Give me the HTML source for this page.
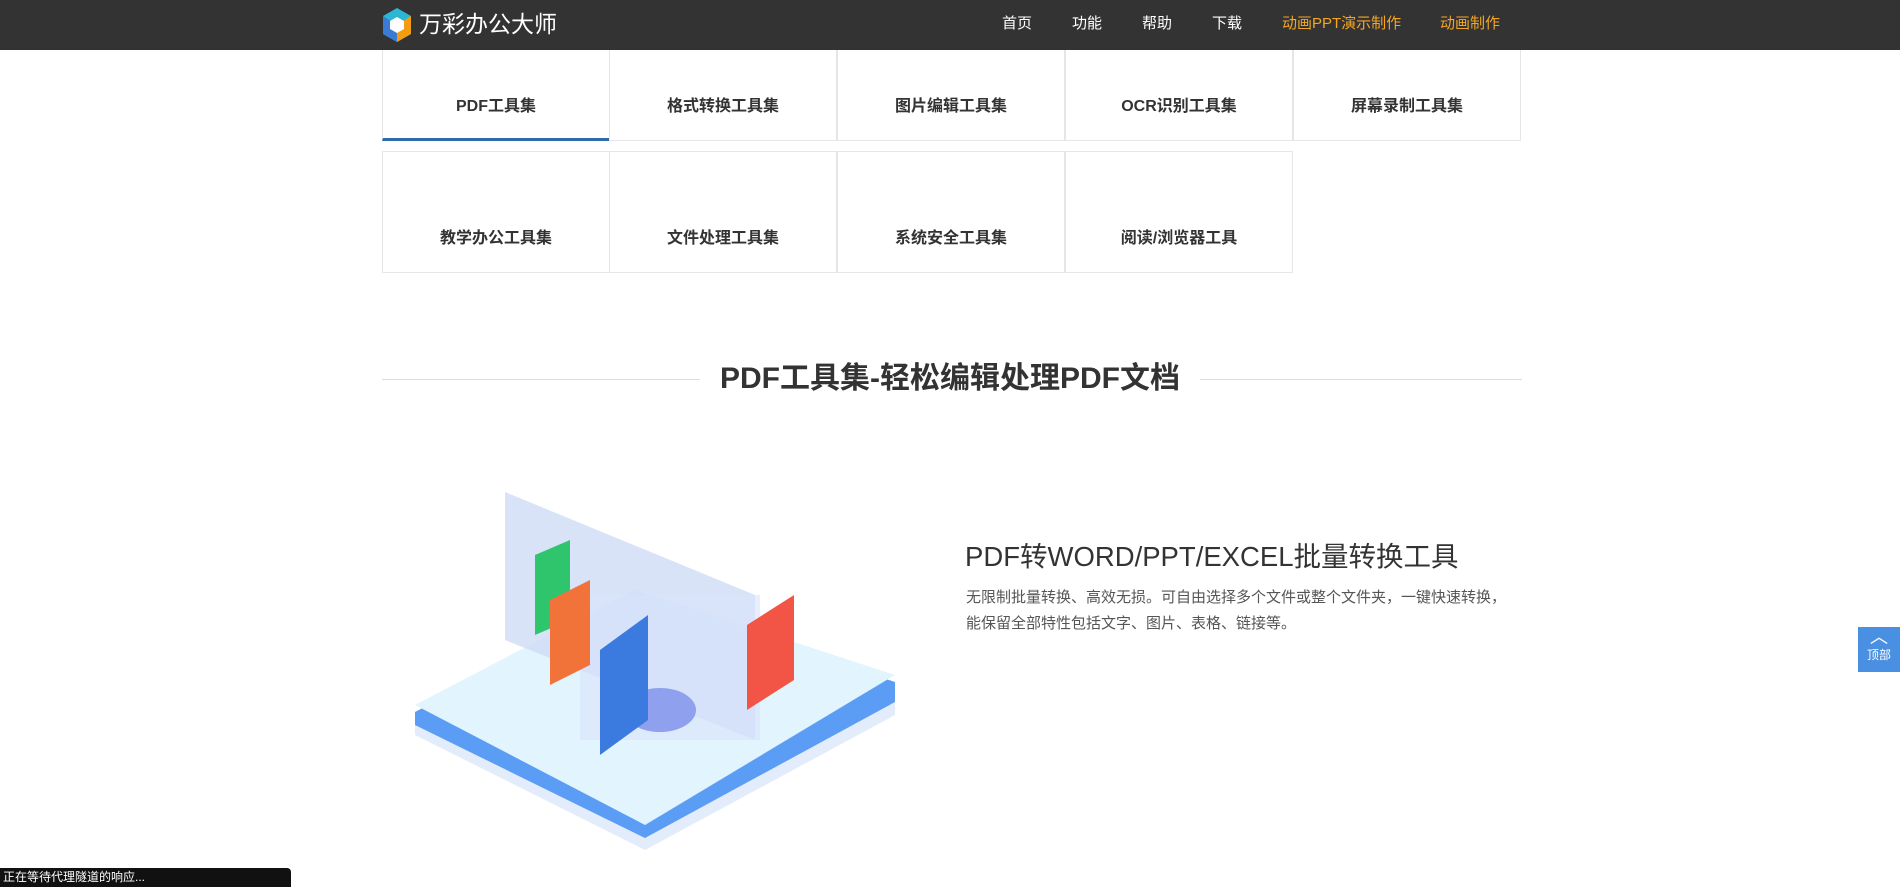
<!DOCTYPE html>
<html><head><meta charset="utf-8"><style>
*{margin:0;padding:0;box-sizing:border-box}
body{width:1900px;height:887px;overflow:hidden;background:#fff;font-family:"Liberation Sans","Noto Sans CJK SC",sans-serif;color:#333;position:relative}
.nav{position:absolute;left:0;top:0;width:1900px;height:50px;background:#333}
.logo{position:absolute;left:381px;top:7px}
.logotxt{position:absolute;left:419px;top:9px;color:#fff;font-size:23px;line-height:30px}
.ni{position:absolute;top:14px;font-size:15px;color:#fff;line-height:20px}
.ni.o{color:#f5a623}
.tab{position:absolute;width:228px;border:1px solid #e6e6e6;font-size:16px;font-weight:bold;text-align:center;color:#333}
.r1{top:50px;height:91px;line-height:20px;padding-top:47px;border-top:none}
.r2{top:151px;height:122px;padding-top:77px;line-height:20px}
.h2{position:absolute;left:382px;top:379px;width:1140px;height:1px;background:#ddd}
.h2t{position:absolute;left:700px;top:358px;width:500px;text-align:center;background:#fff;font-size:30px;font-weight:bold;line-height:42px;color:#333}
.pt{position:absolute;left:965px;top:538px;font-size:27.5px;line-height:38px;color:#333}
.pd{position:absolute;left:966px;top:585px;font-size:15px;line-height:26px;color:#555;width:546px}
.top{position:absolute;left:1858px;top:627px;width:42px;height:45px;background:#4a90e2;color:#fff;font-size:12px;text-align:center}
.status{position:absolute;left:0;top:868px;width:291px;height:19px;background:#111;color:#fff;font-size:12px;line-height:19px;padding-left:3px;border-radius:0 4px 0 0}
</style></head><body>
<div class="nav">
<svg class="logo" width="32" height="36" viewBox="0 0 32 36"><polygon points="16,1 30,9 30,27 16,35 2,27 2,9" fill="#2bb6d6"/><polygon points="16,18 30,9 30,27 16,35" fill="#f39c12"/><polygon points="2,27 16,35 16,18 2,9" fill="#3a7bd5"/><polygon points="16,10 23,14 23,22 16,26 9,22 9,14" fill="#fff"/></svg>
<div class="logotxt">万彩办公大师</div>
<div class="ni" style="left:1002px">首页</div>
<div class="ni" style="left:1072px">功能</div>
<div class="ni" style="left:1142px">帮助</div>
<div class="ni" style="left:1212px">下载</div>
<div class="ni o" style="left:1282px">动画PPT演示制作</div>
<div class="ni o" style="left:1440px">动画制作</div>
</div>
<div class="tab r1" style="left:382px;border-bottom:3px solid #2f6aad">PDF工具集</div>
<div class="tab r1" style="left:609px">格式转换工具集</div>
<div class="tab r1" style="left:837px">图片编辑工具集</div>
<div class="tab r1" style="left:1065px">OCR识别工具集</div>
<div class="tab r1" style="left:1293px">屏幕录制工具集</div>
<div class="tab r2" style="left:382px">教学办公工具集</div>
<div class="tab r2" style="left:609px">文件处理工具集</div>
<div class="tab r2" style="left:837px">系统安全工具集</div>
<div class="tab r2" style="left:1065px">阅读/浏览器工具</div>
<div class="h2"></div>
<div class="h2t">PDF工具集-轻松编辑处理PDF文档</div>
<svg style="position:absolute;left:400px;top:480px" width="510" height="380" viewBox="0 0 510 380">
<polygon points="15,240 235,125 495,210 495,235 245,370 15,255" fill="#e3ecfb"/>
<polygon points="15,232 235,117 495,202 495,222 245,358 15,245" fill="#5b9cf5"/>
<polygon points="15,225 235,110 495,195 245,345" fill="#e2f4fe"/>
<polygon points="105,12 355,115 355,260 105,160" fill="#cfdcf6" opacity=".8"/>
<polygon points="180,115 360,115 360,260 180,260" fill="#d8e2fa" opacity=".6"/>
<ellipse cx="260" cy="230" rx="36" ry="22" fill="#8fa0ee"/>
<polygon points="135,75 170,60 170,140 135,155" fill="#2fc56d"/>
<polygon points="150,120 190,100 190,185 150,205" fill="#f2733a"/>
<polygon points="200,170 248,135 248,240 200,275" fill="#3b7bdf"/>
<polygon points="347,145 394,115 394,200 347,230" fill="#f25546"/>
</svg>
<div class="pt">PDF转WORD/PPT/EXCEL批量转换工具</div>
<div class="pd">无限制批量转换、高效无损。可自由选择多个文件或整个文件夹，一键快速转换，能保留全部特性包括文字、图片、表格、链接等。</div>
<div class="top"><div style="font-size:18px;line-height:20px">︿</div><div style="line-height:16px">顶部</div></div>
<div class="status">正在等待代理隧道的响应...</div>
</body></html>
